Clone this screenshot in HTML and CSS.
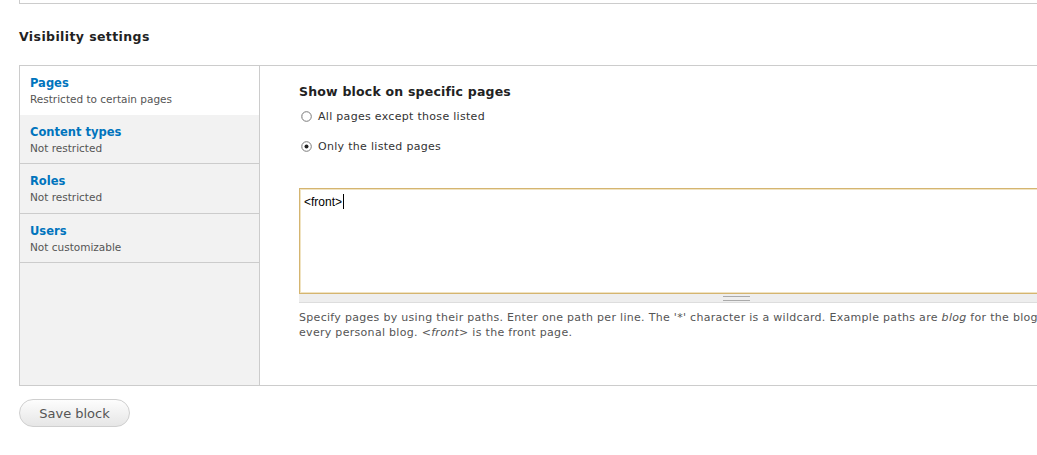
FILE: index.html
```html
<!DOCTYPE html>
<html>
<head>
<meta charset="utf-8">
<link rel="stylesheet" href="styles.css">
</head>
<body>
<div class="page">
  <div class="prev-fieldset"></div>
  <h2 class="section-title">Visibility settings</h2>
  <div class="vtabs">
    <ul class="vtabs-list">
      <li class="vtab selected">
        <a class="vtab-link" href="#"><strong>Pages</strong><span class="summary">Restricted to certain pages</span></a>
      </li>
      <li class="vtab">
        <a class="vtab-link" href="#"><strong>Content types</strong><span class="summary">Not restricted</span></a>
      </li>
      <li class="vtab">
        <a class="vtab-link" href="#"><strong>Roles</strong><span class="summary">Not restricted</span></a>
      </li>
      <li class="vtab">
        <a class="vtab-link" href="#"><strong>Users</strong><span class="summary">Not customizable</span></a>
      </li>
    </ul>
    <div class="vtabs-panes">
      <div class="form-item">
        <div class="label">Show block on specific pages</div>
        <div class="radio">
          <svg class="radio-icon" width="11" height="11" viewBox="0 0 11 11"><circle cx="5.5" cy="5.5" r="4.8" fill="#fff" stroke="#7a7a7a" stroke-width="1"/><path d="M2.2 8.6 A4.5 4.5 0 0 1 2.4 2.2" stroke="#b8b8b8" fill="none" stroke-width="1"/></svg>
          <span>All pages except those listed</span>
        </div>
        <div class="radio">
          <svg class="radio-icon" width="11" height="11" viewBox="0 0 11 11"><circle cx="5.5" cy="5.5" r="4.8" fill="#fff" stroke="#7a7a7a" stroke-width="1"/><path d="M2.2 8.6 A4.5 4.5 0 0 1 2.4 2.2" stroke="#b8b8b8" fill="none" stroke-width="1"/><circle cx="5.5" cy="5.5" r="2" fill="#222"/></svg>
          <span>Only the listed pages</span>
        </div>
      </div>
      <div class="textarea-wrap">
        <div class="textarea"><span class="ta-text">&lt;front&gt;</span><span class="caret"></span></div>
        <div class="grippie"><span class="grip-lines"></span></div>
      </div>
      <div class="description">Specify pages by using their paths. Enter one path per line. The '*' character is a wildcard. Example paths are <em>blog</em> for the blog page and <em>blog/*</em> for<br>every personal blog. <em>&lt;front&gt;</em> is the front page.</div>
    </div>
  </div>
  <div class="actions">
    <button class="button" type="button">Save block</button>
  </div>
</div>
</body>
</html>
```

FILE: styles.css
```css
html, body {
  margin: 0;
  padding: 0;
  overflow: hidden;
  background: #fff;
}
body {
  font-family: "DejaVu Sans", Verdana, sans-serif;
  color: #333;
  width: 1037px;
  height: 455px;
}
.page {
  padding-left: 19px;
  width: 1200px;
}
.prev-fieldset {
  height: 3px;
  border-left: 1px solid #ccc;
  border-bottom: 1px solid #ccc;
}
.section-title {
  margin: 0;
  padding-top: 25px;
  font-size: 12.5px;
  font-weight: bold;
  line-height: 16px;
  height: 36px;
  color: #222;
  letter-spacing: 0.4px;
}
.vtabs {
  display: flex;
  border: 1px solid #ccc;
  border-right: none;
  height: 319px;
}
.vtabs-list {
  list-style: none;
  margin: 0;
  padding: 0;
  width: 239px;
  flex: none;
  background: #f2f2f2;
  border-right: 1px solid #ccc;
}
.vtab {
  border-bottom: 1px solid #ccc;
  height: 48px;
}
.vtab:nth-child(3) { height: 49px; }
.vtab.selected {
  background: #fff;
  border-bottom: none;
  height: 49px;
}
.vtab-link {
  display: flex;
  flex-direction: column;
  padding: 9px 0 0 10px;
  text-decoration: none;
}
.vtab-link .summary { margin-top: 1px; }
.vtab-link strong {
  color: #0074bd;
  font-size: 11.5px;
  line-height: 16px;
  font-weight: bold;
}
.summary {
  color: #555;
  font-size: 10.5px;
  line-height: 15px;
}
.vtabs-panes {
  flex: 1;
  padding: 17px 0 0 39px;
}
.label {
  font-size: 12.5px;
  font-weight: bold;
  color: #222;
  line-height: 18px;
  letter-spacing: 0.2px;
}
.radio {
  display: flex;
  align-items: center;
  gap: 6px;
  font-size: 11px;
  letter-spacing: 0.3px;
  color: #333;
  height: 16px;
  margin-top: 7px;
  padding-left: 2px;
}
.radio + .radio { margin-top: 14px; }
.radio-icon { flex: none; }
.textarea-wrap {
  margin-top: 34px;
}
.textarea {
  border: 1px solid #d5b570;
  box-shadow: inset 0 0 0 1px #f0e3c2;
  background: #fff;
  padding: 5px 4px;
  box-sizing: content-box;
  font-family: "Liberation Sans", Arial, sans-serif;
  font-size: 12px;
  line-height: 16px;
  color: #000;
  display: flex;
  align-items: flex-start;
  height: 94px;
}
.caret {
  display: inline-block;
  width: 1px;
  height: 15px;
  background: #000;
  margin-left: 1px;
}
.grippie {
  height: 8px;
  background: #eee;
  border-bottom: 1px solid #ddd;
  position: relative;
}
.grip-lines {
  position: absolute;
  left: 424px;
  top: 2px;
  width: 27px;
  height: 3px;
  border-top: 1px solid #aaa;
  border-bottom: 1px solid #aaa;
}
.description {
  margin-top: 7px;
  font-size: 11px;
  letter-spacing: 0.3px;
  line-height: 15px;
  color: #555;
  white-space: nowrap;
}
.actions {
  padding-top: 13px;
}
.button {
  width: 111px;
  height: 28px;
  border: 1px solid #cfcfcf;
  border-radius: 14px;
  background: linear-gradient(#fdfdfd, #e6e6e6);
  font-family: "DejaVu Sans", Verdana, sans-serif;
  font-size: 13px;
  color: #555;
  padding: 0;
  cursor: pointer;
}
```
